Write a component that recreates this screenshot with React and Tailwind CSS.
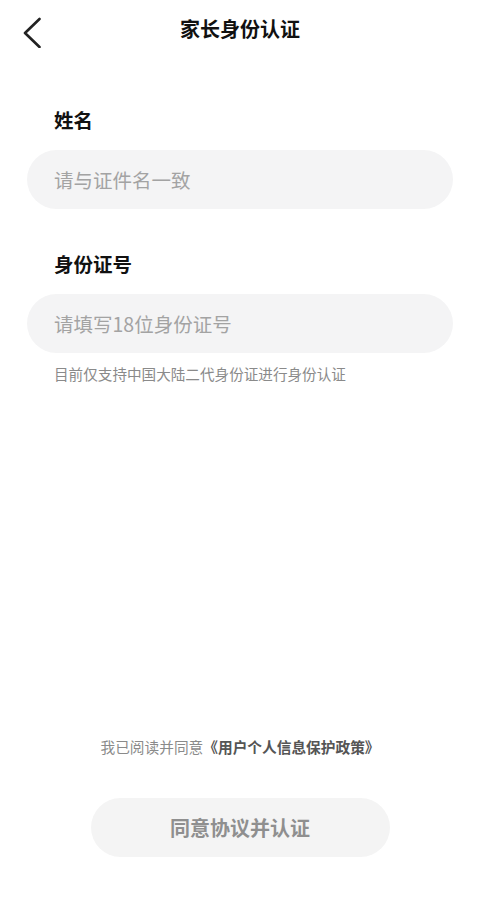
const font = { fontFamily: '"Noto Sans CJK SC", "Noto Sans", sans-serif' };

const Field = ({ label, placeholder, className = '' }) => (
  <div className={className}>
    <h2 className="pl-[54px] text-[19.5px] font-bold leading-[26px] text-[#111]">{label}</h2>
    <div className="mx-[27px] mt-[17px] flex h-[59px] items-center rounded-full bg-[#f4f4f5] pl-[27px]">
      <span className="text-[19.5px] text-[#a3a3a3]">{placeholder}</span>
    </div>
  </div>
);

export default function App() {
  return (
    <div className="flex h-[917px] w-[480px] flex-col bg-white" style={font}>
      <header className="relative flex h-[58px] items-center justify-center">
        <button className="absolute left-[19px] top-[12px] p-1">
          <svg width="22" height="32" viewBox="0 0 22 32" fill="none">
            <path d="M16.5 3 L2 17 L16.5 31" stroke="#222" strokeWidth="2.6" strokeLinecap="round" strokeLinejoin="round" />
          </svg>
        </button>
        <h1 className="text-[20px] font-bold text-[#111]">家长身份认证</h1>
      </header>

      <Field label="姓名" placeholder="请与证件名一致" className="mt-[49px]" />
      <Field label="身份证号" placeholder="请填写18位身份证号" className="mt-[42px]" />
      <p className="mt-[10px] pl-[54px] text-[14.6px] text-[#8a8a8a]">目前仅支持中国大陆二代身份证进行身份认证</p>

      <div className="mt-auto flex flex-col items-center pb-[60px]">
        <p className="text-[14.7px] text-[#8a8a8a]">
          我已阅读并同意<span className="font-bold text-[#555]">《用户个人信息保护政策》</span>
        </p>
        <button className="mt-[40px] flex h-[59px] w-[299px] items-center justify-center rounded-full bg-[#f4f4f4] text-[20px] font-bold text-[#8f8f8f]">
          同意协议并认证
        </button>
      </div>
    </div>
  );
}
